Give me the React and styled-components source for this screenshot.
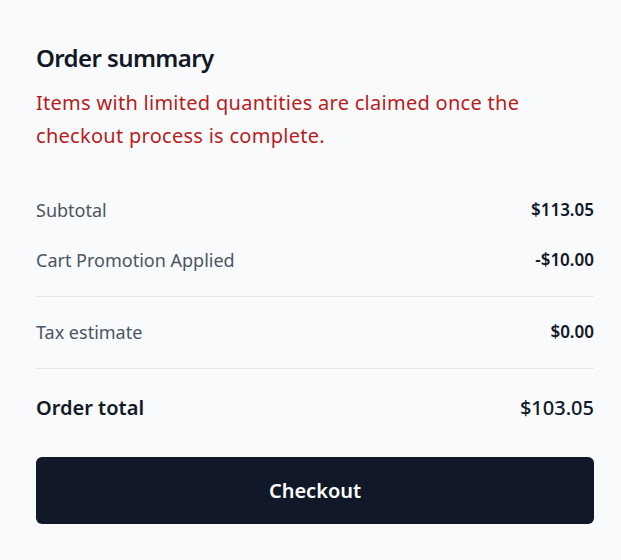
import styled, { createGlobalStyle } from 'styled-components';

const GlobalStyle = createGlobalStyle`
  body {
    margin: 0;
    background: #f9fafb;
    font-family: "Noto Sans", "Open Sans", sans-serif;
  }
`;

const rows = [
  { label: 'Subtotal', value: '$113.05' },
  { label: 'Cart Promotion Applied', value: '-$10.00' },
  { label: 'Tax estimate', value: '$0.00', bordered: true },
];

export default function App() {
  return (
    <>
      <GlobalStyle />
      <Card>
        <Title>Order summary</Title>
        <Notice>
          Items with limited quantities are claimed once the checkout process is
          complete.
        </Notice>
        <List>
          {rows.map((row) => (
            <Row key={row.label} $bordered={row.bordered}>
              <Label>{row.label}</Label>
              <Value>{row.value}</Value>
            </Row>
          ))}
          <Row $bordered $total>
            <TotalLabel>Order total</TotalLabel>
            <TotalValue>$103.05</TotalValue>
          </Row>
        </List>
        <Button>Checkout</Button>
      </Card>
    </>
  );
}

const Card = styled.section`
  display: flex;
  flex-direction: column;
  padding: 42px 27px 36px 36px;
  background: #f9fafb;
`;

const Title = styled.h2`
  margin: 0;
  font-size: 24px;
  line-height: 32px;
  font-weight: 600;
  letter-spacing: -0.6px;
  color: #111827;
`;

const Notice = styled.p`
  margin: 12px 0 0;
  font-size: 20px;
  line-height: 33px;
  letter-spacing: 0.28px;
  color: #b91c1c;
`;

const List = styled.dl`
  display: flex;
  flex-direction: column;
  gap: 22px;
  margin: 44px 0 0;
`;

const Row = styled.div`
  display: flex;
  justify-content: space-between;
  align-items: center;
  border-top: ${(p) => (p.$bordered ? '1px solid #e5e7eb' : 'none')};
  padding-top: ${(p) => (p.$bordered ? (p.$total ? '24px' : '21px') : '0')};
`;

const Label = styled.dt`
  font-size: 18px;
  line-height: 28px;
  color: #4b5563;
`;

const Value = styled.dd`
  margin: 0;
  font-size: 17px;
  line-height: 28px;
  font-weight: 600;
  color: #111827;
`;

const TotalLabel = styled.dt`
  font-size: 20px;
  line-height: 30px;
  font-weight: 600;
  color: #111827;
`;

const TotalValue = styled.dd`
  margin: 0;
  font-size: 20px;
  line-height: 30px;
  font-weight: 500;
  color: #111827;
`;

const Button = styled.button`
  margin-top: 34px;
  height: 67px;
  width: 100%;
  border: none;
  border-radius: 6px;
  background: #111827;
  color: #ffffff;
  font-family: inherit;
  font-size: 20px;
  font-weight: 600;
  cursor: pointer;
`;
